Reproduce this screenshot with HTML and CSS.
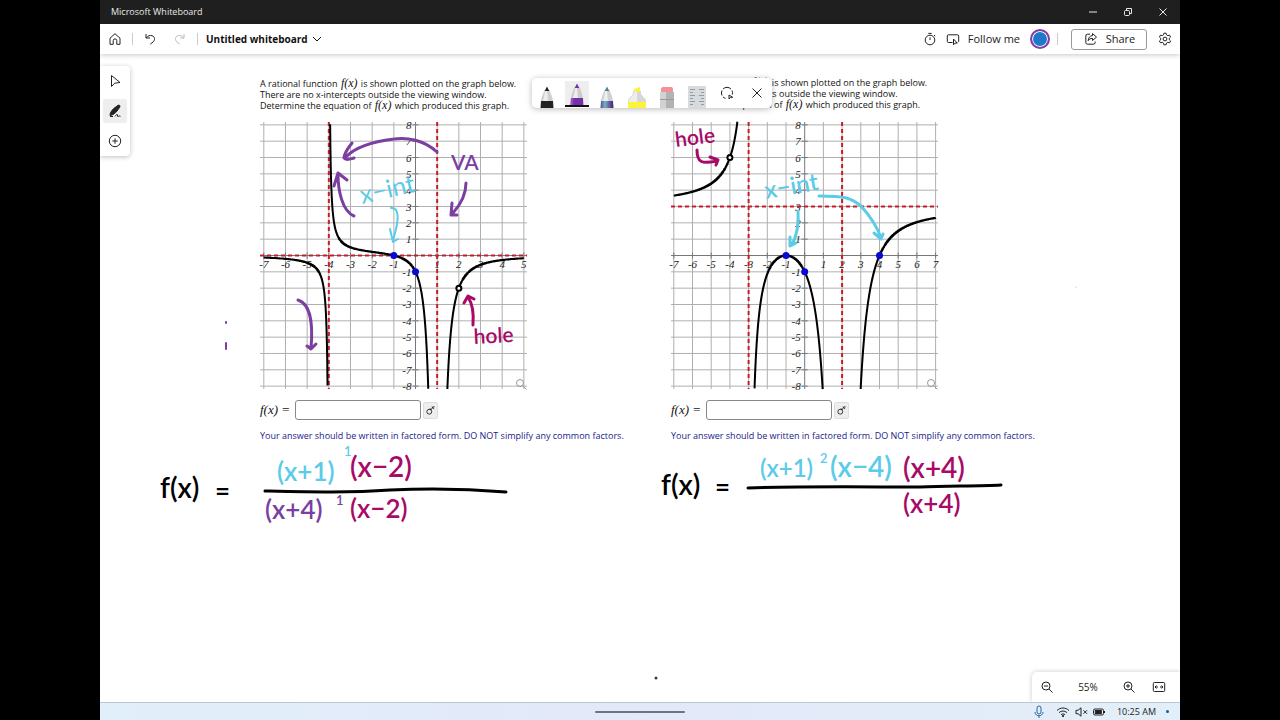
FILE: index.html
```html
<!DOCTYPE html>
<html lang="en">
<head>
<meta charset="utf-8">
<title>Microsoft Whiteboard</title>
<link rel="stylesheet" href="styles.css">
</head>
<body>
<div class="app">
  <div class="titlebar">
    <span class="app-name">Microsoft Whiteboard</span>
    <div class="window-buttons">
      <button type="button" aria-label="Minimize"><svg viewBox="0 0 16 16"><path d="M4 8h8"/></svg></button>
      <button type="button" aria-label="Restore"><svg viewBox="0 0 16 16"><rect x="4.500" y="6.500" width="5" height="5" rx="1"/><path d="M6.500 6V4.500h5v5H10"/></svg></button>
      <button type="button" aria-label="Close"><svg viewBox="0 0 16 16"><path d="M4.500 4.500l7 7m0-7l-7 7"/></svg></button>
    </div>
  </div>

  <header class="commandbar">
    <button type="button" class="icon" aria-label="Home"><svg viewBox="0 0 16 16"><path d="M3 7.200L8 2.700l5 4.500v6.100H9.800V9.700a1.800 1.800 0 0 0-3.600 0v3.600H3z"/></svg></button>
    <span class="divider"></span>
    <button type="button" class="icon" aria-label="Undo"><svg viewBox="0 0 16 16"><path d="M4 3v4h4M4.200 6.800C6 4.700 8 4 10 4.700c3.200 1.100 3.200 4.300 1 6.300L8.300 13.200"/></svg></button>
    <button type="button" class="icon faded" aria-label="Redo"><svg viewBox="0 0 16 16"><path d="M12 3v4H8M11.800 6.800C10 4.700 8 4 6 4.700c-3.200 1.100-3.200 4.300-1 6.300L7.700 13.200"/></svg></button>
    <span class="divider"></span>
    <button type="button" class="board-name">Untitled whiteboard<svg viewBox="0 0 16 16"><path d="M4 6l4 4 4-4"/></svg></button>
    <span class="spacer"></span>
    <button type="button" class="icon timer" aria-label="Timer"><svg viewBox="0 0 16 16"><circle cx="8" cy="9" r="4.800"/><path d="M8 6.300V9M6.300 2.400h3.400M12 4l1.200 1.200"/></svg></button>
    <button type="button" class="follow"><svg viewBox="0 0 16 16"><path d="M7.500 11.500H3.500a1.200 1.200 0 0 1-1.200-1.200V5a1.200 1.200 0 0 1 1.200-1.200h9A1.200 1.200 0 0 1 13.700 5v5.300l-.700 1M8.500 8v5.800l1.500-1.700h2.200z"/></svg>Follow me</button>
    <button type="button" class="avatar" aria-label="Account"></button>
    <span class="divider"></span>
    <button type="button" class="share"><svg viewBox="0 0 16 16"><path d="M7 3.200H4.500A1.700 1.700 0 0 0 2.800 5v6.500a1.700 1.700 0 0 0 1.700 1.700h6a1.700 1.700 0 0 0 1.700-1.700V10.500M9.500 2.500l4 3.600-4 3.400V7.400c-2.200 0-3.400.7-4.300 2.300.200-3 1.600-4.900 4.300-5.100z"/></svg>Share</button>
    <button type="button" class="icon" aria-label="Settings"><svg viewBox="0 0 16 16"><circle cx="8" cy="8" r="1.900"/><path d="M6.900 2.200h2.200l.4 1.700 1.300.8 1.700-.6 1.100 1.900-1.300 1.200v1.600l1.300 1.200-1.100 1.900-1.700-.6-1.300.8-.4 1.700H6.900l-.4-1.700-1.300-.8-1.700.6L2.400 10l1.300-1.200V7.200L2.400 6l1.100-1.900 1.700.6 1.300-.8z"/></svg></button>
  </header>

  <main class="board">
    <article class="problem problem-a">
      <p class="prompt">A rational function <span class="math">f(x)</span> is shown plotted on the graph below.<br>There are no x-intercepts outside the viewing window.<br>Determine the equation of <span class="math">f(x)</span> which produced this graph.</p>
      <svg class="graph" viewBox="0 0 267 268" data-graph="a" role="img" aria-label="Graph with vertical asymptotes at -4 and 1"></svg>
      <div class="answer">
        <label class="math" for="answer-a">f(x) =</label>
        <input id="answer-a" type="text">
        <button type="button" aria-label="Equation editor"><svg viewBox="0 0 16 16"><circle cx="6.500" cy="9.500" r="3"/><path d="M8.500 7.200l2.500-3M9.500 3.500l3 2.500M10.500 3.500h2.500M6.500 6.300H9"/></svg></button>
      </div>
      <p class="note">Your answer should be written in factored form. DO NOT simplify any common factors.</p>
    </article>

    <article class="problem problem-b">
      <p class="prompt">A rational function <span class="math">f(x)</span> is shown plotted on the graph below.<br>There are no x-intercepts outside the viewing window.<br>Determine the equation of <span class="math">f(x)</span> which produced this graph.</p>
      <svg class="graph" viewBox="0 0 267 268" data-graph="b" role="img" aria-label="Graph with vertical asymptotes at -3 and 2"></svg>
      <div class="answer">
        <label class="math" for="answer-b">f(x) =</label>
        <input id="answer-b" type="text">
        <button type="button" aria-label="Equation editor"><svg viewBox="0 0 16 16"><circle cx="6.500" cy="9.500" r="3"/><path d="M8.500 7.200l2.500-3M9.500 3.500l3 2.500M10.500 3.500h2.500M6.500 6.300H9"/></svg></button>
      </div>
      <p class="note">Your answer should be written in factored form. DO NOT simplify any common factors.</p>
    </article>

    <svg class="ink" viewBox="100 54 1080 648" width="1080" height="648">
      <g class="purple">
        <path d="M437 152C424 140 407 137 394 139C378 141 356 146 346 157M352 143C348 148 344 154 344 158C346 161 350 159 354 158"/>
        <path d="M354 216C342 211 338 190 338 174M334 186L338 173L347 180"/>
        <path d="M466 183C466 196 460 205 453 213M452 203L451 215L457 215"/>
        <path d="M298 300C311 304 313 326 311 348M307 346L311 349L316 344"/>
        <path class="thin" d="M226 343v6M226 322v1"/>
        <text x="451" y="170" class="hand-s">VA</text>
        <text x="265" y="519" class="hand-l">(x+4)</text>
        <text x="336" y="505" class="hand-t">1</text>
      </g>
      <g class="cyan">
        <path class="thin" d="M391 208C400 207 399 221 393 240M390 229L393 242L398 239"/>
        <text x="362" y="204" class="hand-n" transform="rotate(-13 362 204)">x−int</text>
        <text x="766" y="199" class="hand-m" transform="rotate(-10 766 199)">x−int</text>
        <path class="thick" d="M798 211C799 224 797 235 792 245M790 237L790 246L796 243"/>
        <path class="thick" d="M819 196C846 196 851 198 861 206C870 216 877 226 881 238M874 233L881 239L883 234"/>
        <text x="277" y="481" class="hand-l">(x+1)</text>
        <text x="344" y="456" class="hand-t">1</text>
        <text x="760" y="477" class="hand-m">(x+1)</text>
        <text x="820" y="463" class="hand-t">2</text>
        <text x="830" y="477" class="hand-xl">(x−4)</text>
      </g>
      <g class="magenta">
        <path d="M473 325C474 312 472 303 468 297M464 303L468 296L474 299"/>
        <text x="474" y="344" class="hand-s" transform="rotate(-3 474 344)">hole</text>
        <path d="M697 150C697 163 702 164 717 161M710 157L718 160L716 165"/>
        <text x="676" y="147" class="hand-s" transform="rotate(-7 676 147)">hole</text>
        <text x="350" y="477" class="hand-xl">(x−2)</text>
        <text x="350" y="518" class="hand-l">(x−2)</text>
        <text x="903" y="478" class="hand-xl">(x+4)</text>
        <text x="903" y="513" class="hand-l">(x+4)</text>
      </g>
      <g class="black">
        <text x="160" y="498" class="hand-xl">f(x)</text>
        <text x="215" y="501" class="hand-l">=</text>
        <text x="661" y="495" class="hand-xl">f(x)</text>
        <text x="715" y="497" class="hand-l">=</text>
        <path d="M265 491C310 492 350 493 390 490C430 488 470 489 506 492"/>
        <path d="M748 488C800 486 870 487 920 487C950 486 980 486 1001 485"/>
      </g>
      <circle cx="656" cy="678" r="1.500" fill="#3b3570"/>
      <circle cx="1076" cy="287" r=".5" fill="#999"/>
    </svg>

    <nav class="tools" aria-label="Tools">
      <button type="button" aria-label="Select"><svg viewBox="0 0 16 16"><path d="M4.500 2.500v11L7.700 10.200l5.300-.7z"/></svg></button>
      <button type="button" class="active" aria-label="Inking"><svg viewBox="0 0 16 16"><path class="solid" d="M3 12.500C3 10 4.500 7.500 7 5.300L11 2.300c1.300-.7 2.500.5 1.800 1.800L10 8C8 10.500 6 12 3 12.500z"/><path d="M8 13.300c2-2.500 2.800-2.300 2.500-.3 0 1 .9.400 2 0l1 .3M3 13.500h3"/></svg></button>
      <button type="button" aria-label="Create"><svg viewBox="0 0 16 16"><circle cx="8" cy="8" r="5.700"/><path d="M8 5.300v5.400M5.300 8h5.400"/></svg></button>
    </nav>

    <div class="pens" role="toolbar" aria-label="Pens">
      <button type="button" aria-label="Black pen"><svg viewBox="0 0 30 30"><path fill="#d0d0d0" d="M12.500 12C11 16 9 20 9 24h12c0-4-2-8-3.500-12z"/><path fill="#eee" d="M13.500 12L11 24h5l-1-12z"/><path fill="#222" d="M15 8.500l-2.300 4.500h4.600zM9 23h12l.5 7h-13z"/></svg></button>
      <button type="button" class="picked" aria-label="Purple pen"><svg viewBox="0 0 30 30"><path fill="#ccc" d="M12.500 9C11 13 9 17 9 21h12c0-4-2-8-3.500-12z"/><path fill="#eee" d="M13.500 9L11 21h5l-1-12z"/><path fill="#7330a8" d="M15 5.500l-2.300 4.500h4.600zM9 20h12l.5 9h-13z"/><path fill="#9350bd" d="M9 20h2.500l-.5 9H8.500z"/></svg></button>
      <button type="button" aria-label="Galaxy pen"><svg viewBox="0 0 30 30"><defs><linearGradient id="galaxy"><stop offset="0" stop-color="#5a4c9c"/><stop offset=".35" stop-color="#73b7bd"/><stop offset=".65" stop-color="#6e5ba9"/><stop offset="1" stop-color="#26375c"/></linearGradient></defs><path fill="#d0d0d0" d="M12.500 12C11 16 9 20 9 24h12c0-4-2-8-3.500-12z"/><path fill="#eee" d="M13.500 12L11 24h5l-1-12z"/><path fill="#418794" d="M15 8.500l-2.300 4.500h4.600z"/><path fill="url(#galaxy)" d="M9 23h12l.5 7h-13z"/></svg></button>
      <button type="button" aria-label="Yellow highlighter"><svg viewBox="0 0 30 30"><path fill="#d7d7d7" d="M11 13h8v3l5 6v8H6v-8l5-6z"/><path fill="#eee" d="M12 13h3v12H7v-3l5-6z"/><path fill="#fbf53a" d="M12 11l6-2v4.500h-6zM6 24h18v6H6z"/></svg></button>
      <button type="button" aria-label="Eraser"><svg viewBox="0 0 30 30"><rect x="9" y="9" width="12" height="7" rx="2" fill="#f1929b"/><rect x="8" y="14" width="14" height="16" fill="#b2b2b2"/><rect x="8" y="14" width="6" height="16" fill="#d2d2d2"/><path fill="#999" d="M8 21h14v1H8z"/></svg></button>
      <button type="button" aria-label="Ruler"><svg viewBox="0 0 30 30"><rect x="6" y="8" width="18" height="22" rx="1" fill="#d8dbde"/><path class="line" stroke="#949a9f" d="M8 11.500h5M8 14.500h3M8 17.500h5M8 20.500h3M8 23.500h5M8 26.500h3M22 11.500h-5M22 14.500h-3M22 17.500h-5M22 20.500h-3M22 23.500h-5M22 26.500h-3"/></svg></button>
      <button type="button" aria-label="Lasso select"><svg viewBox="0 0 30 30"><path class="line" stroke="#222" d="M13.500 20.300A5.600 5.600 0 0 1 11 19M10 17.500a5.600 5.600 0 0 1 0-5M11 11a5.600 5.600 0 0 1 8 0M20 12.500a5.600 5.600 0 0 1 .3 4M17 17v4l1.500-1.700h2.200z"/></svg></button>
      <button type="button" aria-label="Close pens"><svg viewBox="0 0 30 30"><path class="line" stroke="#222" d="M10.500 10.500l9 9m0-9l-9 9"/></svg></button>
    </div>

    <div class="zoom">
      <button type="button" aria-label="Zoom out"><svg viewBox="0 0 16 16"><circle cx="7" cy="7" r="4"/><path d="M10 10l3.500 3.500M5 7h4"/></svg></button>
      <span>55%</span>
      <button type="button" aria-label="Zoom in"><svg viewBox="0 0 16 16"><circle cx="7" cy="7" r="4"/><path d="M10 10l3.500 3.500M5 7h4M7 5v4"/></svg></button>
      <button type="button" aria-label="Fit to screen"><svg viewBox="0 0 16 16"><rect x="2.300" y="3.500" width="11.400" height="9" rx="1"/><path d="M4 8h3M9 8h3M5.500 6.500L4 8l1.500 1.500M10.500 6.500L12 8l-1.500 1.500"/></svg></button>
    </div>
  </main>

  <footer class="taskbar">
    <span></span>
    <span class="handle"></span>
    <div class="tray">
      <svg class="mic" viewBox="0 0 16 16"><rect x="6" y="2" width="4" height="8" rx="2"/><path d="M4 8c0 5 8 5 8 0M8 12v2"/></svg>
      <svg viewBox="0 0 16 16"><path d="M2 6.500c3.500-3.300 8.500-3.300 12 0M4 8.700c2.400-2.200 5.600-2.200 8 0M6 10.700c1.300-1.100 2.700-1.100 4 0"/><circle class="solid" cx="8" cy="12" r=".7"/></svg>
      <svg viewBox="0 0 16 16"><path d="M3 6.300h2l3-2.500v8.400L5 9.700H3zM10.500 6.300L14 9.800m0-3.500l-3.500 3.500"/></svg>
      <svg viewBox="0 0 16 16"><rect x="2.500" y="5" width="10" height="6" rx="1.500"/><rect class="solid" x="4.300" y="6.500" width="6" height="3"/><path d="M13.500 7v2"/></svg>
      <time>10:25 AM</time>
      <span class="alert"></span>
    </div>
  </footer>
</div>
<script src="graphs.js"></script>
</body>
</html>
```
FILE: styles.css
```css
* { box-sizing: border-box; }
body {
  margin: 0;
  background: #000;
  color: #222;
  font: 11px/16px "Open Sans", "Noto Sans", sans-serif;
}
button {
  display: flex;
  align-items: center;
  justify-content: center;
  margin: 0;
  padding: 0;
  border: 0;
  background: none;
  color: inherit;
  font: inherit;
}
svg { display: block; flex: none; }
button svg, .tray svg {
  width: 16px;
  height: 16px;
  fill: none;
  stroke: currentColor;
  stroke-width: 1;
}
.solid { fill: currentColor; }

.app {
  display: grid;
  grid-template-rows: 24px 30px 1fr 18px;
  min-height: 100vh;
  margin: 0 100px;
  background: #fff;
}

.titlebar {
  display: flex;
  align-items: center;
  justify-content: space-between;
  padding-left: 11px;
  background: #1f1f1f;
  color: #e8e8e8;
  font-size: 9px;
}
.window-buttons { display: flex; }
.window-buttons button { width: 35px; height: 24px; }

.commandbar {
  display: flex;
  align-items: center;
  position: relative;
  background: #fff;
  box-shadow: 0 1px 5px rgba(0, 0, 0, .22);
  z-index: 2;
}
.icon { width: 30px; height: 30px; }
.timer { margin-right: -5px; width: 40px; }
.faded { color: #bbb; }
.divider { width: 1px; height: 12px; margin: 0 2px; background: #ccc; }
.board-name { gap: 1px; margin-left: 6px; color: #111; font-weight: 700; font-size: 10px; }
.spacer { flex: 1; }
.follow { gap: 7px; }
.avatar {
  width: 20px;
  height: 20px;
  margin: 0 5px 0 10px;
  border: 2px solid #8a3a9f;
  border-radius: 50%;
  background: #2077cc;
  box-shadow: inset 0 0 0 1px #fff;
}
.share {
  gap: 7px;
  width: 76px;
  height: 21px;
  margin: 0 3px 0 11px;
  border: 1px solid #999;
  border-radius: 3px;
}

.board { position: relative; overflow: hidden; background: #fff; }

.problem { position: absolute; color: #111; }
.problem-a { left: 160px; top: 24px; }
.problem-b { left: 571px; top: 23px; }
.prompt, .note {
  margin: 0;
  font: 9px/11px "Open Sans", "Noto Sans", sans-serif;
  white-space: nowrap;
}
.math { font: italic 12px/10px "Liberation Serif", serif; }
.prompt .math { padding: 0 1px; }
.graph { width: 267px; height: 268px; margin-top: 11px; overflow: visible; }
.problem-b .graph { margin-top: 12px; }
.answer { display: flex; align-items: center; gap: 2px; margin-top: 10px; }
.answer input {
  width: 126px;
  height: 20px;
  border: 1px solid #888;
  border-radius: 3px;
  background: #fff;
}
.answer label { width: 33px; font-size: 13px; white-space: nowrap; }
.answer button {
  width: 15px;
  height: 17px;
  border: 1px solid #ddd;
  border-radius: 2px;
  background: #eee;
}
.answer button svg { width: 13px; height: 13px; }
.note { margin-top: 10px; color: #1a1a8c; }

.grid { stroke: #b0b0b0; stroke-width: 1; }
.axis { stroke: #777; stroke-width: 1; }
.asymptote { stroke: #c91c2b; stroke-width: 2; stroke-dasharray: 4 3; }
.curve { fill: none; stroke: #000; stroke-width: 2; }
.mark { fill: #0808d8; }
.hole { fill: #fff; stroke: #000; stroke-width: 2; }
.tick { fill: #222; font: italic 11px "Liberation Serif", serif; }
.lens { fill: none; stroke: #999; stroke-width: 1; }

.ink { position: absolute; left: 0; top: 0; pointer-events: none; }
.ink path { fill: none; stroke: currentColor; stroke-width: 3; stroke-linecap: round; stroke-linejoin: round; }
.ink .thin { stroke-width: 2; }
.ink text { fill: currentColor; font-family: Lato, sans-serif; font-weight: 600; }
.ink .hand-t { font-size: 13px; }
.ink .hand-s { font-size: 21px; }
.ink .hand-n { font-size: 25px; font-weight: 400; }
.ink .hand-m { font-size: 24px; }
.ink .hand-l { font-size: 26px; }
.ink .hand-xl { font-size: 28px; }
.purple { color: #7a3fa0; }
.cyan { color: #5bcbe8; }
.magenta { color: #a80a68; }
.black { color: #000; }

.tools {
  position: absolute;
  left: 0;
  top: 12px;
  padding: 3px;
  border-radius: 0 4px 4px 0;
  background: #fff;
  box-shadow: 0 1px 5px rgba(0, 0, 0, .25);
}
.tools button { width: 24px; height: 24px; margin-bottom: 6px; border-radius: 2px; }
.tools button:last-child { margin-bottom: 0; }
.tools .active { background: #eee; }

.pens {
  position: absolute;
  left: 432px;
  top: 24px;
  display: grid;
  grid-template-columns: repeat(8, 30px);
  border-radius: 5px;
  background: #fff;
  box-shadow: 0 1px 6px rgba(0, 0, 0, .28);
}
.pens button { height: 30px; }
.pens svg { width: 30px; height: 30px; stroke: none; }
.pens .line { fill: none; stroke-width: 1; }
.pens .picked { width: 24px; height: 26px; margin: 3px 3px 0; border-bottom: 2px solid #111; background: #eee; overflow: hidden; }

.zoom {
  position: absolute;
  right: 0;
  bottom: 0;
  display: grid;
  grid-template-columns: 30px 1fr 30px 30px;
  align-items: center;
  width: 148px;
  height: 30px;
  padding-right: 6px;
  border-radius: 5px 0 0 0;
  background: #fff;
  box-shadow: 0 0 5px rgba(0, 0, 0, .22);
  font-size: 10px;
}
.zoom button { height: 30px; }
.zoom span { text-align: center; }

.taskbar {
  display: grid;
  grid-template-columns: 1fr 90px 1fr;
  align-items: center;
  border-top: 1px solid #bcc6d0;
  background: linear-gradient(90deg, #e1effa, #e3e8f9 50%, #e2eff8);
}
.handle { height: 2px; border-radius: 1px; background: #6c7486; }
.tray { display: flex; align-items: center; justify-content: flex-end; gap: 2px; padding-right: 11px; font-size: 9px; }
.mic { margin-right: 6px; color: #2767a5; }
.tray time { margin: 0 8px; }
.alert { width: 3px; height: 3px; border-radius: 50%; background: #0067a8; }
```
FILE: graphs.js
```js
const NS = "http://www.w3.org/2000/svg";
const graphs = {
  a: {
    originX: 155.5, unitX: 21.67, maxX: 5, level: 0, poles: [-4, 1],
    f: x => -4 * (x + 1) / ((x + 4) * (x - 1) ** 2),
    points: [[-1, 0], [0, -1]], hole: [2, -2]
  },
  b: {
    originX: 133.7, unitX: 18.7, maxX: 7, level: 3, poles: [-3, 2],
    f: x => 3 * (x + 1) ** 2 * (x - 4) / ((x + 3) * (x - 2) ** 2),
    points: [[-1, 0], [0, -1], [4, 0]], hole: [-4, 6]
  }
};

function draw(svg, g) {
  const X = x => g.originX + g.unitX * x;
  const Y = y => 133.5 - 16.33 * y;
  const add = (tag, attrs, text) => {
    const el = document.createElementNS(NS, tag);
    for (const key in attrs) el.setAttribute(key, attrs[key]);
    if (text !== undefined) el.textContent = text;
    svg.appendChild(el);
  };
  const line = (cls, x1, y1, x2, y2) => add("line", { class: cls, x1, y1, x2, y2 });

  for (let x = -7; x <= g.maxX; x++) line(x ? "grid" : "axis", X(x), 0, X(x), 267);
  for (let y = -8; y <= 8; y++) {
    line(y ? "grid" : "axis", 0, Y(y), 267, Y(y));
    line("axis", X(0) - 3, Y(y), X(0) + 3, Y(y));
  }
  for (let x = -7; x <= g.maxX; x++) {
    line("axis", X(x), Y(0) - 3, X(x), Y(0) + 3);
    if (x) add("text", { class: "tick", x: X(x), y: Y(0) + 12, "text-anchor": "middle" }, x);
  }
  for (let y = -8; y <= 8; y++) {
    if (y) add("text", { class: "tick", x: X(0) - 4, y: Y(y) + 4, "text-anchor": "end" }, y);
  }
  line("asymptote", 0, Y(g.level), 267, Y(g.level));
  for (const p of g.poles) line("asymptote", X(p), 0, X(p), 267);

  const edges = [-7, ...g.poles, g.maxX];
  for (let i = 0; i < edges.length - 1; i++) {
    const pts = [];
    for (let x = edges[i]; x <= edges[i + 1] + 0.0001; x += 0.002) {
      const y = g.f(x);
      if (Math.abs(y) < 8.2) pts.push(X(x).toFixed(1) + "," + Y(y).toFixed(1));
    }
    add("polyline", { class: "curve", points: pts.join(" ") });
  }
  for (const [x, y] of g.points) add("circle", { class: "mark", cx: X(x), cy: Y(y), r: 3.5 });
  add("circle", { class: "hole", cx: X(g.hole[0]), cy: Y(g.hole[1]), r: 2.5 });
  add("circle", { class: "lens", cx: 260, cy: 261, r: 3.5 });
  add("path", { class: "lens", d: "M262.500 263.500l4 4" });
}

document.querySelectorAll("[data-graph]").forEach(svg => draw(svg, graphs[svg.dataset.graph]));
```
